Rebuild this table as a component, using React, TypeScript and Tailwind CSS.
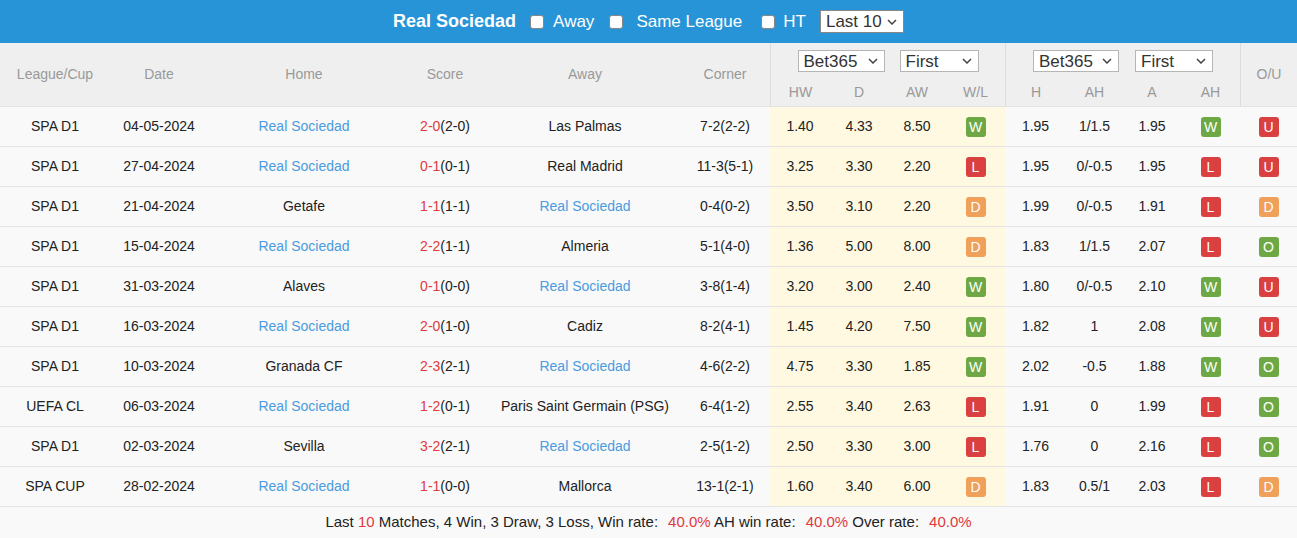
import React from "react";

type Row = {
  lg: string;
  date: string;
  home: string;
  homeLink: boolean;
  ft: string;
  ht: string;
  away: string;
  corner: string;
  hw: string;
  d: string;
  aw: string;
  wl: string;
  h: string;
  ah: string;
  a: string;
  ahr: string;
  ou: string;
};

const rows: Row[] = [
  { lg: "SPA D1", date: "04-05-2024", home: "Real Sociedad", homeLink: true, ft: "2-0", ht: "(2-0)", away: "Las Palmas", corner: "7-2(2-2)", hw: "1.40", d: "4.33", aw: "8.50", wl: "W", h: "1.95", ah: "1/1.5", a: "1.95", ahr: "W", ou: "U" },
  { lg: "SPA D1", date: "27-04-2024", home: "Real Sociedad", homeLink: true, ft: "0-1", ht: "(0-1)", away: "Real Madrid", corner: "11-3(5-1)", hw: "3.25", d: "3.30", aw: "2.20", wl: "L", h: "1.95", ah: "0/-0.5", a: "1.95", ahr: "L", ou: "U" },
  { lg: "SPA D1", date: "21-04-2024", home: "Getafe", homeLink: false, ft: "1-1", ht: "(1-1)", away: "Real Sociedad", corner: "0-4(0-2)", hw: "3.50", d: "3.10", aw: "2.20", wl: "D", h: "1.99", ah: "0/-0.5", a: "1.91", ahr: "L", ou: "D" },
  { lg: "SPA D1", date: "15-04-2024", home: "Real Sociedad", homeLink: true, ft: "2-2", ht: "(1-1)", away: "Almeria", corner: "5-1(4-0)", hw: "1.36", d: "5.00", aw: "8.00", wl: "D", h: "1.83", ah: "1/1.5", a: "2.07", ahr: "L", ou: "O" },
  { lg: "SPA D1", date: "31-03-2024", home: "Alaves", homeLink: false, ft: "0-1", ht: "(0-0)", away: "Real Sociedad", corner: "3-8(1-4)", hw: "3.20", d: "3.00", aw: "2.40", wl: "W", h: "1.80", ah: "0/-0.5", a: "2.10", ahr: "W", ou: "U" },
  { lg: "SPA D1", date: "16-03-2024", home: "Real Sociedad", homeLink: true, ft: "2-0", ht: "(1-0)", away: "Cadiz", corner: "8-2(4-1)", hw: "1.45", d: "4.20", aw: "7.50", wl: "W", h: "1.82", ah: "1", a: "2.08", ahr: "W", ou: "U" },
  { lg: "SPA D1", date: "10-03-2024", home: "Granada CF", homeLink: false, ft: "2-3", ht: "(2-1)", away: "Real Sociedad", corner: "4-6(2-2)", hw: "4.75", d: "3.30", aw: "1.85", wl: "W", h: "2.02", ah: "-0.5", a: "1.88", ahr: "W", ou: "O" },
  { lg: "UEFA CL", date: "06-03-2024", home: "Real Sociedad", homeLink: true, ft: "1-2", ht: "(0-1)", away: "Paris Saint Germain (PSG)", corner: "6-4(1-2)", hw: "2.55", d: "3.40", aw: "2.63", wl: "L", h: "1.91", ah: "0", a: "1.99", ahr: "L", ou: "O" },
  { lg: "SPA D1", date: "02-03-2024", home: "Sevilla", homeLink: false, ft: "3-2", ht: "(2-1)", away: "Real Sociedad", corner: "2-5(1-2)", hw: "2.50", d: "3.30", aw: "3.00", wl: "L", h: "1.76", ah: "0", a: "2.16", ahr: "L", ou: "O" },
  { lg: "SPA CUP", date: "28-02-2024", home: "Real Sociedad", homeLink: true, ft: "1-1", ht: "(0-0)", away: "Mallorca", corner: "13-1(2-1)", hw: "1.60", d: "3.40", aw: "6.00", wl: "D", h: "1.83", ah: "0.5/1", a: "2.03", ahr: "L", ou: "D" },
];

const GRID =
  "grid grid-cols-[110px_98px_192px_90px_190px_90px_60px_58px_58px_59px_61px_57px_58px_59px_57px]";

function Badge({ v }: { v: string }) {
  const color =
    v === "W" || v === "O"
      ? "bg-[#6ea844]"
      : v === "L" || v === "U"
      ? "bg-[#d9403f]"
      : "bg-[#f0a058]";
  return (
    <span
      className={`inline-flex h-[20px] w-[20px] items-center justify-center rounded-[3px] text-[14px] leading-none text-white ${color}`}
    >
      {v}
    </span>
  );
}

function Chevron() {
  return (
    <svg width="10" height="6" viewBox="0 0 10 6" className="shrink-0">
      <path d="M1 1l4 4 4-4" fill="none" stroke="#444" strokeWidth="1.5" />
    </svg>
  );
}

function Select({ label, w }: { label: string; w: string }) {
  return (
    <div
      className={`flex h-[22px] items-center justify-between border border-[#b5b5b5] bg-white pl-[5px] pr-[6px] text-[17px] leading-none text-[#333] ${w}`}
    >
      <span>{label}</span>
      <Chevron />
    </div>
  );
}

function Checkbox() {
  return (
    <span className="inline-block h-[14px] w-[14px] rounded-[3px] border border-[#888] bg-white" />
  );
}

function Link({ children }: { children: React.ReactNode }) {
  return <span className="text-[#4a9be0]">{children}</span>;
}

function Red({ children }: { children: React.ReactNode }) {
  return <span className="text-[#e0393e]">{children}</span>;
}

function Colon() {
  return (
    <>
      :<span className="inline-block w-[10px]" />
    </>
  );
}

export default function App() {
  return (
    <div
      className="w-[1297px] bg-white text-[14px] text-[#222]"
      style={{ fontFamily: '"Liberation Sans", Arial, sans-serif' }}
    >
      {/* Top bar */}
      <div className="flex h-[43px] items-center justify-center bg-[#2794d7] text-white">
        <span className="text-[18px] font-bold">Real Sociedad</span>
        <span className="ml-[14px] flex items-center">
          <Checkbox />
        </span>
        <span className="ml-[9px] text-[17px]">Away</span>
        <span className="ml-[15px] flex items-center">
          <Checkbox />
        </span>
        <span className="ml-[13px] text-[17px]">Same League</span>
        <span className="ml-[19px] flex items-center">
          <Checkbox />
        </span>
        <span className="ml-[8px] text-[17px]">HT</span>
        <div className="ml-[14px] flex h-[23px] w-[84px] items-center justify-between border border-[#888] bg-white pl-[5px] pr-[6px] text-[17px] leading-none text-[#333]">
          <span>Last 10</span>
          <Chevron />
        </div>
      </div>

      {/* Header */}
      <div
        className={`${GRID} grid-rows-[36px_27px] border-b border-[#e3e3e3] bg-[#efefef] text-[14px] text-[#999]`}
      >
        <div className="row-span-2 flex items-center justify-center">League/Cup</div>
        <div className="row-span-2 flex items-center justify-center">Date</div>
        <div className="row-span-2 flex items-center justify-center">Home</div>
        <div className="row-span-2 flex items-center justify-center">Score</div>
        <div className="row-span-2 flex items-center justify-center">Away</div>
        <div className="row-span-2 flex items-center justify-center">Corner</div>
        <div className="col-span-4 flex items-start justify-center gap-[15px] border-l border-[#dcdcdc] pt-[7px]">
          <Select label="Bet365" w="w-[87px]" />
          <Select label="First" w="w-[79px]" />
        </div>
        <div className="col-span-4 flex items-start justify-center gap-[16px] border-l border-[#dcdcdc] pt-[7px]">
          <Select label="Bet365" w="w-[86px]" />
          <Select label="First" w="w-[78px]" />
        </div>
        <div className="col-start-15 row-span-2 row-start-1 flex items-center justify-center border-l border-[#dcdcdc]">
          O/U
        </div>
        <div className="col-start-7 row-start-2 flex items-center justify-center border-l border-[#dcdcdc]">HW</div>
        <div className="flex items-center justify-center">D</div>
        <div className="flex items-center justify-center">AW</div>
        <div className="flex items-center justify-center">W/L</div>
        <div className="flex items-center justify-center border-l border-[#dcdcdc]">H</div>
        <div className="flex items-center justify-center">AH</div>
        <div className="flex items-center justify-center">A</div>
        <div className="flex items-center justify-center">AH</div>
      </div>

      {/* Body */}
      {rows.map((r, i) => (
        <div
          key={i}
          className={`${GRID} h-[40px] border-b border-[#e3e3e3] bg-[#f9f9f9]`}
        >
          <div className="flex items-center justify-center">{r.lg}</div>
          <div className="flex items-center justify-center">{r.date}</div>
          <div className="flex items-center justify-center">
            {r.homeLink ? <Link>{r.home}</Link> : r.home}
          </div>
          <div className="flex items-center justify-center">
            <Red>{r.ft}</Red>
            <span>{r.ht}</span>
          </div>
          <div className="flex items-center justify-center whitespace-nowrap">
            {r.homeLink ? r.away : <Link>{r.away}</Link>}
          </div>
          <div className="flex items-center justify-center">{r.corner}</div>
          <div className="flex items-center justify-center bg-[#fff9e2]">{r.hw}</div>
          <div className="flex items-center justify-center bg-[#fff9e2]">{r.d}</div>
          <div className="flex items-center justify-center bg-[#fff9e2]">{r.aw}</div>
          <div className="flex items-center justify-center bg-[#fff9e2]">
            <Badge v={r.wl} />
          </div>
          <div className="flex items-center justify-center">{r.h}</div>
          <div className="flex items-center justify-center">{r.ah}</div>
          <div className="flex items-center justify-center">{r.a}</div>
          <div className="flex items-center justify-center">
            <Badge v={r.ahr} />
          </div>
          <div className="flex items-center justify-center">
            <Badge v={r.ou} />
          </div>
        </div>
      ))}

      {/* Footer */}
      <div className="flex h-[32px] items-center justify-center border-b border-[#e3e3e3] bg-[#f9f9f9] text-[15px]">
        <span>
          Last <Red>10</Red> Matches, 4 Win, 3 Draw, 3 Loss, Win rate
          <Colon />
          <Red>40.0%</Red> AH win rate
          <Colon />
          <Red>40.0%</Red> Over rate
          <Colon />
          <Red>40.0%</Red>
        </span>
      </div>
    </div>
  );
}
